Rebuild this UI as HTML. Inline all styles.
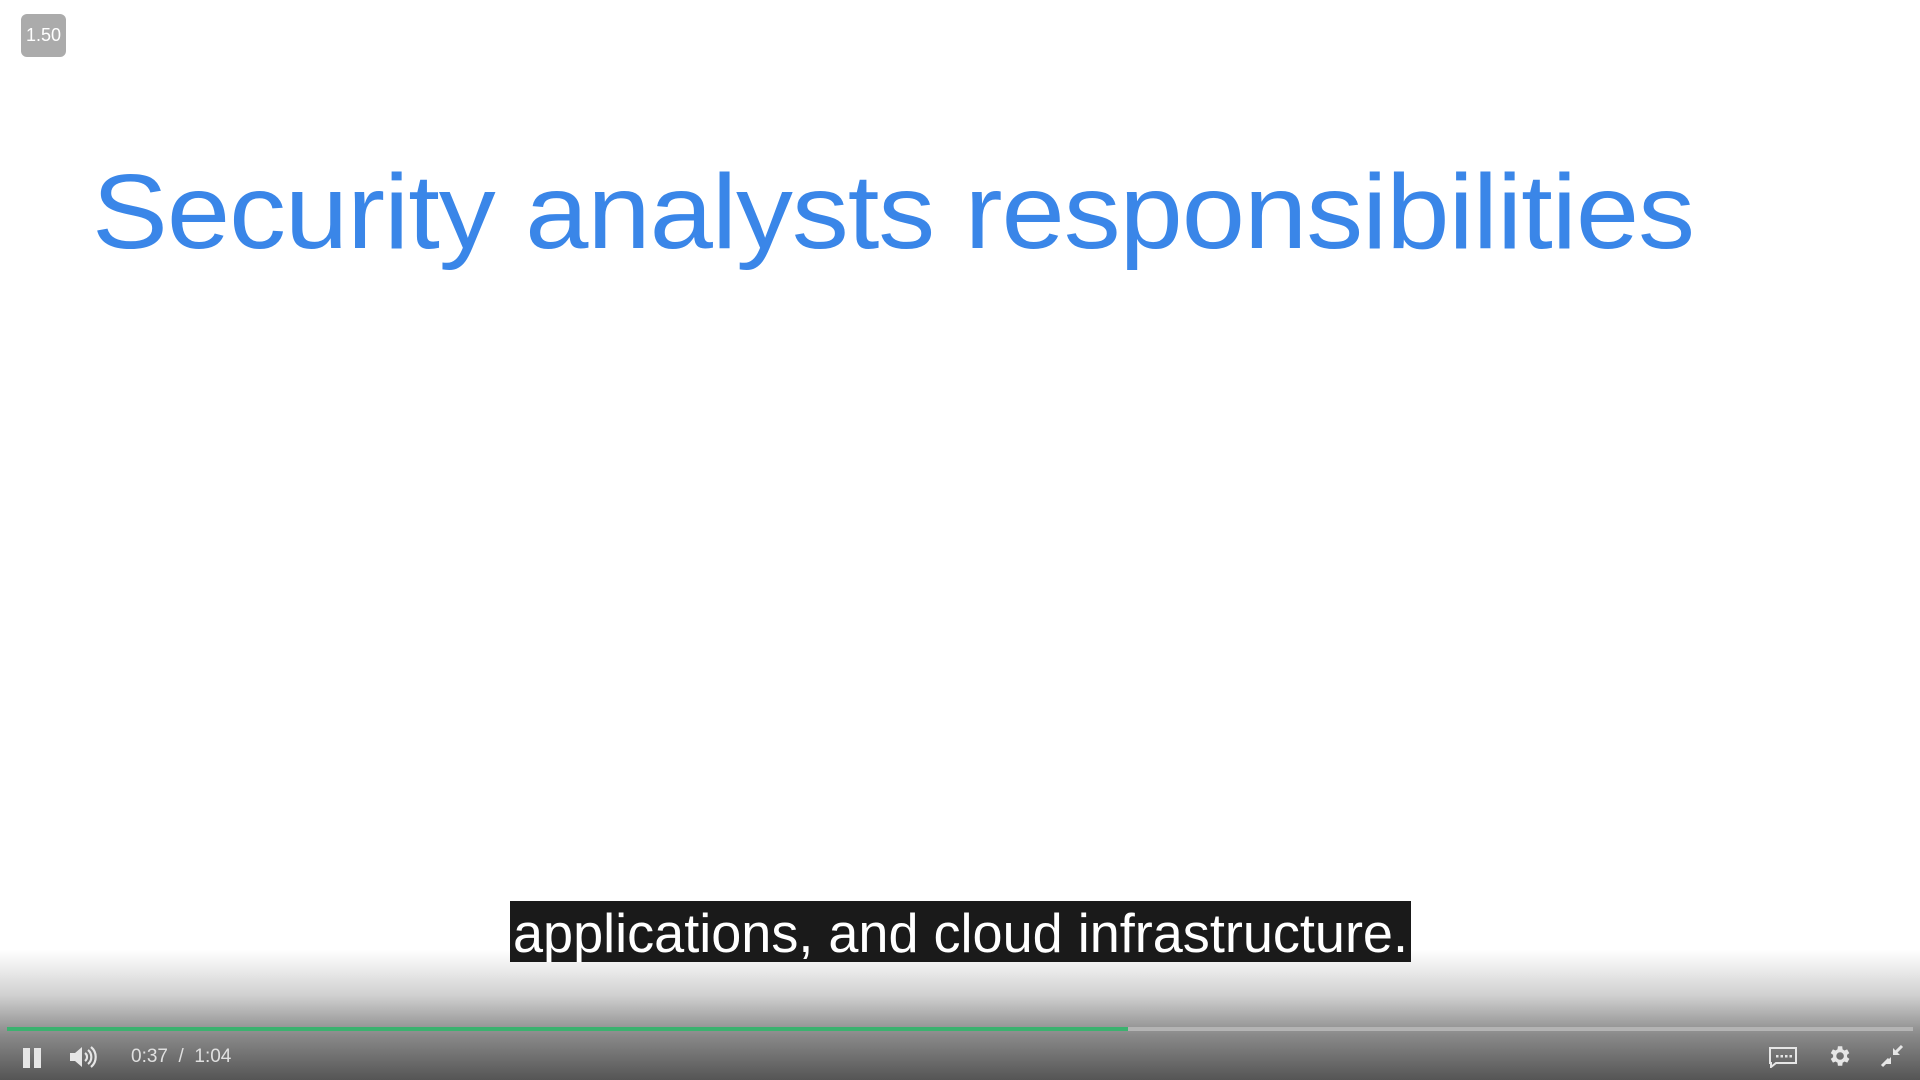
<!DOCTYPE html>
<html><head><style>
html,body{margin:0;padding:0;width:1920px;height:1080px;overflow:hidden;background:#fff;font-family:"Liberation Sans",sans-serif}
.badge{position:absolute;left:21px;top:14px;width:45px;height:43px;border-radius:6px;background:#ababab;color:#fff;font-size:18px;line-height:43px;text-align:center}
.title{position:absolute;left:92px;top:152px;font-size:106px;color:#3a86e8;white-space:nowrap;transform-origin:left top;letter-spacing:-1px}
.cap{position:absolute;left:510px;top:901px;width:901px;height:61px;background:#1a1a1a;overflow:hidden;z-index:5}
.cap span{position:absolute;left:3px;top:0;color:#fff;font-size:55px;line-height:64px;white-space:nowrap;transform-origin:left top}
.grad{position:absolute;left:0;top:950px;width:1920px;height:130px;background:linear-gradient(#ffffff00 0%,#d0d0d0 35%,#8a8a8a 65%,#555 100%)}
.track{position:absolute;left:7px;top:1027px;width:1906px;height:4px;background:#b4b4b4}
.prog{position:absolute;left:7px;top:1027px;width:1121px;height:4px;background:#3bb26f}
.time{position:absolute;left:131px;top:1046px;color:#e0e0e0;font-size:19px}
svg{position:absolute}
</style></head><body>
<div class="badge">1.50</div>
<div class="title" id="t">Security analysts responsibilities</div>
<div class="grad"></div>
<div class="cap"><span id="c">applications, and cloud infrastructure.</span></div>
<div class="track"></div><div class="prog"></div>
<svg style="left:22px;top:1047px" width="22" height="22"><rect x="1" y="1" width="7" height="20" fill="#e6e6e6"/><rect x="12" y="1" width="7" height="20" fill="#e6e6e6"/></svg>
<svg style="left:68px;top:1044px" width="30" height="26" viewBox="0 0 30 26"><path d="M2 9h5l7-6v20l-7-6H2z" fill="#e6e6e6"/><path d="M17 9a5 5 0 0 1 0 8M20 6a9 9 0 0 1 0 14M23 3a13 13 0 0 1 0 20" stroke="#e6e6e6" stroke-width="2.2" fill="none"/></svg>
<div class="time">0:37 &nbsp;/ &nbsp;1:04</div>
<svg style="left:1768px;top:1046px" width="30" height="22" viewBox="0 0 30 22"><path d="M2 2h26v15H8l-5 4v-4H2z" fill="none" stroke="#e6e6e6" stroke-width="2"/><rect x="8" y="9" width="2.5" height="2.5" fill="#e6e6e6"/><rect x="12.5" y="9" width="2.5" height="2.5" fill="#e6e6e6"/><rect x="17" y="9" width="2.5" height="2.5" fill="#e6e6e6"/><rect x="21.5" y="9" width="2.5" height="2.5" fill="#e6e6e6"/></svg>
<svg style="left:1826px;top:1043px" width="26" height="26" viewBox="0 0 24 24"><path fill="#e6e6e6" d="M19.4 13a7.5 7.5 0 0 0 0-2l2.1-1.6-2-3.5-2.5 1a7.6 7.6 0 0 0-1.7-1L15 3h-4l-.4 2.9a7.6 7.6 0 0 0-1.7 1l-2.5-1-2 3.5L6.6 11a7.5 7.5 0 0 0 0 2l-2.200 1.6 2 3.5 2.5-1c.5.4 1.1.8 1.7 1L11 21h4l.4-2.9c.6-.2 1.200-.6 1.7-1l2.5 1 2-3.5zM13 15.5a3.5 3.5 0 1 1 0-7 3.5 3.5 0 0 1 0 7z"/></svg>
<svg style="left:1879px;top:1043px" width="26" height="26" viewBox="0 0 26 26"><path d="M14 5v7h7zM12 14v7H5z" fill="#e6e6e6"/><path d="M16 10l7-7M10 16l-7 7" stroke="#e6e6e6" stroke-width="3"/></svg>
<script>
var t=document.getElementById('t');var w=t.getBoundingClientRect().width;t.style.transform='scaleX('+(1602/w)+')';
var c=document.getElementById('c');var cw=c.getBoundingClientRect().width;c.style.transform='scaleX('+(895/cw)+')';
</script>
</body></html>
